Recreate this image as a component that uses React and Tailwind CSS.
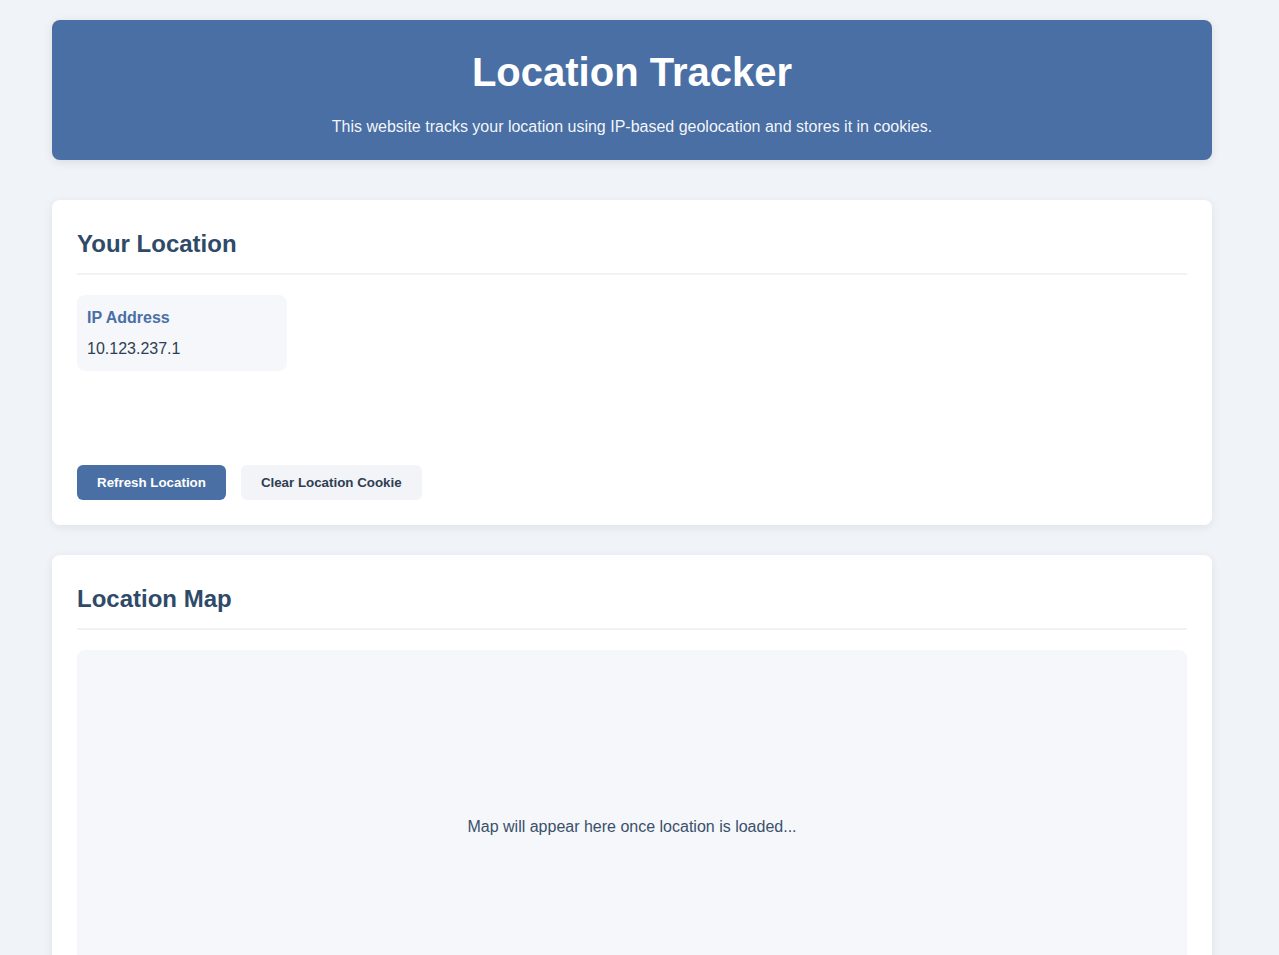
import React from 'react'

// Info tile for a single location field
const InfoItem = ({ label, value }) => (
    <div className="w-[210px] rounded-lg bg-[#f5f7fa] px-[10px] pt-[14px] pb-[13px]">
        <p className="text-base font-bold leading-[18px] text-[#4a6fa5]">{label}</p>
        <p className="mt-[13px] text-base leading-[18px] text-[#2f3e52]">{value}</p>
    </div>
)

const Card = ({ title, children }) => (
    <section className="rounded-lg bg-white px-[25px] pt-[30px] pb-[25px] shadow-[0_2px_10px_rgba(0,0,0,0.08)]">
        <h2 className="border-b-2 border-[#f0f2f5] pb-[15px] text-2xl font-bold leading-[28px] text-[#2f4a68]">
            {title}
        </h2>
        {children}
    </section>
)

const App = () => {
    return (
        // pr-[15px] keeps the gutter the browser scrollbar takes in the reference
        <div className="min-h-[1655px] bg-[#f0f4f8] pr-[15px] font-['Liberation_Sans',Arial,sans-serif]">
            <div className="mx-auto max-w-[1200px] px-5 pt-5 pb-10">
                <header className="rounded-lg bg-[#4a6fa5] px-5 pt-[29px] pb-[24px] text-center text-white shadow-[0_2px_10px_rgba(0,0,0,0.1)]">
                    <h1 className="text-[40px] font-bold leading-[46px]">Location Tracker</h1>
                    <p className="mt-[23px] text-base leading-[18px] text-white/95">
                        This website tracks your location using IP-based geolocation and stores it in cookies.
                    </p>
                </header>

                <div className="mt-10 flex flex-col gap-[30px]">
                    <Card title="Your Location">
                        <div className="mt-5">
                            <InfoItem label="IP Address" value="10.123.237.1" />
                        </div>
                        <div className="mt-[94px] flex gap-[15px]">
                            <button className="h-[35px] rounded-md bg-[#4a6fa5] px-5 text-[13.33px] font-bold text-white">
                                Refresh Location
                            </button>
                            <button className="h-[35px] rounded-md bg-[#f2f4f8] px-5 text-[13.33px] font-bold text-[#2f3e52]">
                                Clear Location Cookie
                            </button>
                        </div>
                    </Card>

                    <Card title="Location Map">
                        <div className="mt-5 flex h-[350px] items-center justify-center rounded-lg bg-[#f5f7fa] pt-[4px]">
                            <p className="text-base text-[#3a506b]">Map will appear here once location is loaded...</p>
                        </div>
                    </Card>
                </div>
            </div>
        </div>
    )
}

export default App
